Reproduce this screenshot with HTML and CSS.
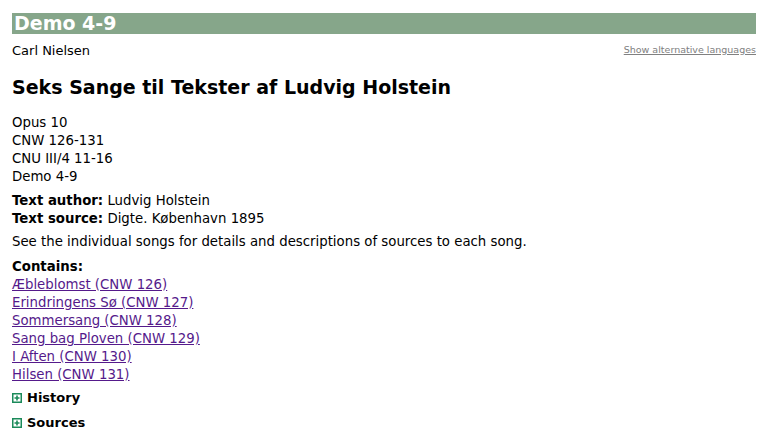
FILE: index.html
```html
<!DOCTYPE html>
<html>
<head>
<meta charset="utf-8">
<link rel="stylesheet" href="styles.css">
</head>
<body>
<div class="page">
  <h1 class="bar">Demo 4-9</h1>
  <div class="meta-row">
    <span class="composer">Carl Nielsen</span>
    <a class="alt-lang" href="#">Show alternative languages</a>
  </div>
  <h2 class="title">Seks Sange til Tekster af Ludvig Holstein</h2>
  <div class="ids">
    <div>Opus 10</div>
    <div>CNW 126-131</div>
    <div>CNU III/4 11-16</div>
    <div>Demo 4-9</div>
  </div>
  <div class="text-info">
    <div><b>Text author:</b> Ludvig Holstein</div>
    <div><b>Text source:</b> Digte. København 1895</div>
  </div>
  <p class="note">See the individual songs for details and descriptions of sources to each song.</p>
  <div class="contains">
    <div class="label">Contains:</div>
    <a href="#">Æbleblomst (CNW 126)</a>
    <a href="#">Erindringens Sø (CNW 127)</a>
    <a href="#">Sommersang (CNW 128)</a>
    <a href="#">Sang bag Ploven (CNW 129)</a>
    <a href="#">I Aften (CNW 130)</a>
    <a href="#">Hilsen (CNW 131)</a>
  </div>
  <div class="section"><span class="plus"><svg width="10" height="10" viewBox="0 0 10 10"><rect x="0.75" y="0.75" width="8.5" height="8.5" fill="#fff" stroke="#1b8a5a" stroke-width="1.5"/><path d="M2.5 5h5M5 2.5v5" stroke="#1b8a5a" stroke-width="1.6"/></svg></span>History</div>
  <div class="section"><span class="plus"><svg width="10" height="10" viewBox="0 0 10 10"><rect x="0.75" y="0.75" width="8.5" height="8.5" fill="#fff" stroke="#1b8a5a" stroke-width="1.5"/><path d="M2.5 5h5M5 2.5v5" stroke="#1b8a5a" stroke-width="1.6"/></svg></span>Sources</div>
</div>
</body>
</html>
```
FILE: styles.css
```css
body {
  margin: 0;
  font-family: "DejaVu Sans", Verdana, sans-serif;
  font-size: 13.3px;
  color: #000;
  background: #fff;
}
.page {
  padding: 13px 12px 0 12px;
}
.bar {
  margin: 0;
  background: #86a68a;
  color: #fff;
  font-size: 19px;
  font-weight: bold;
  line-height: 21px;
  padding: 0 2px;
}
.meta-row {
  display: flex;
  justify-content: space-between;
  align-items: flex-start;
  margin-top: 8px;
  line-height: 17px;
}
.composer { font-size: 13px; }
.alt-lang {
  font-size: 9.5px;
  color: #808080;
  line-height: 12px;
  margin-top: 2px;
}
.title {
  margin: 16px 0 0 0;
  font-size: 19px;
  line-height: 24px;
  font-weight: bold;
}
.ids {
  margin-top: 15px;
  line-height: 18px;
}
.text-info {
  margin-top: 6px;
  line-height: 18px;
}
.note {
  margin: 5px 0 0 0;
  line-height: 18px;
}
.contains {
  margin-top: 7px;
  display: flex;
  flex-direction: column;
  align-items: flex-start;
  line-height: 18px;
}
.label { font-weight: bold; }
.contains a { color: #551a8b; }
.section {
  display: flex;
  align-items: center;
  gap: 5px;
  font-weight: bold;
  font-size: 13px;
  line-height: 18px;
  margin-top: 5px;
}
.section + .section { margin-top: 7px; }
.plus { display: flex; }
```
